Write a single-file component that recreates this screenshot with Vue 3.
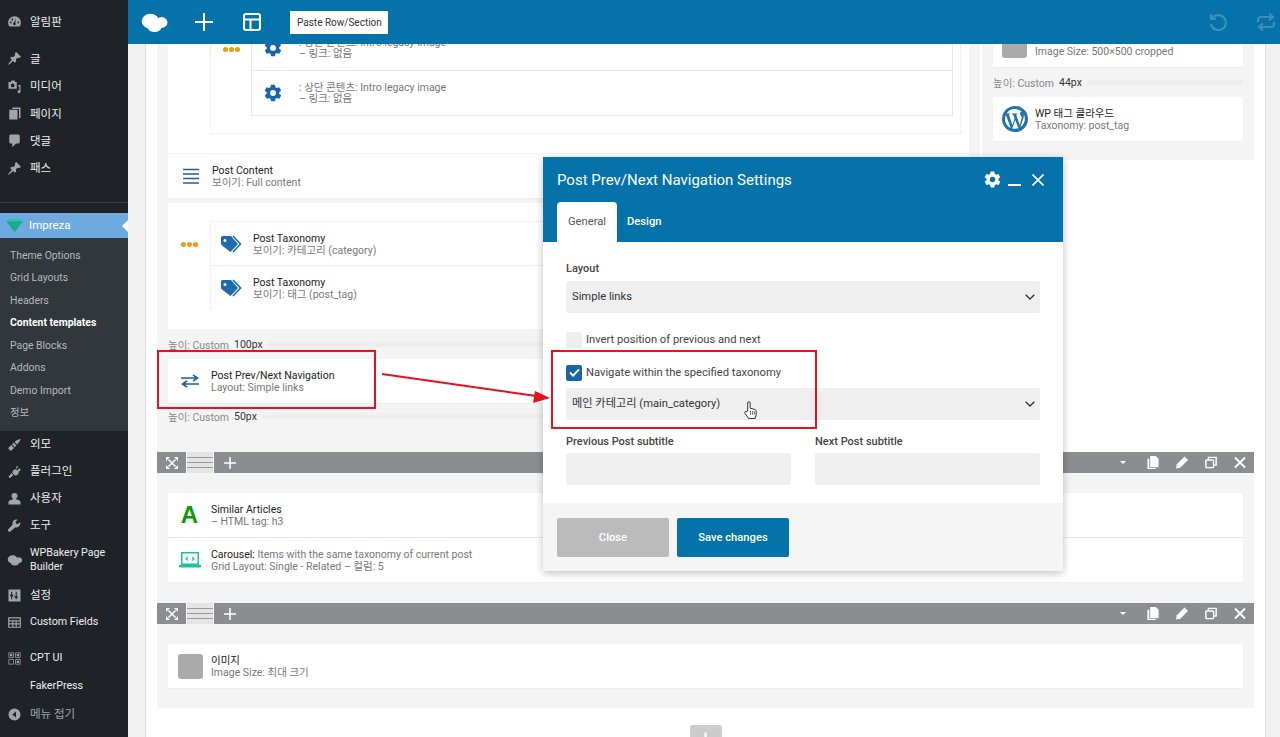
<script setup>
const pin = 'M10.44 3.02l1.82-1.82 6.36 6.35-1.83 1.82c-1.05-.68-2.48-.57-3.41.36l-.75.75c-.92.93-1.04 2.35-.35 3.41l-1.83 1.82-2.41-2.41-2.8 2.79c-.42.42-3.38 2.71-3.8 2.29s1.86-3.39 2.28-3.81l2.79-2.79L4.1 9.36l1.83-1.82c1.05.69 2.48.57 3.4-.36l.75-.75c.93-.92 1.05-2.35.36-3.41z';
const cloud = 'M1 8.500a6.500 5.500 0 1 0 13 0a6.500 5.500 0 1 0-13 0zM11.500 9.500a4.300 4 0 1 0 8.600 0a4.300 4 0 1 0-8.600 0zM5.500 13.500a5 3 0 1 0 10 0a5 3 0 1 0-10 0z';

const topMenu = [
  { label: '알림판', gap: 0, d: 'M10 3a8.500 8.500 0 0 0-8.500 8.500c0 2 .7 3.800 1.800 5.200h13.400a8.400 8.400 0 0 0 1.800-5.200A8.500 8.500 0 0 0 10 3zm-5 9.500a1.200 1.200 0 1 1 0-2.400 1.200 1.200 0 0 1 0 2.400zm2-4a1.200 1.200 0 1 1 0-2.400 1.200 1.200 0 0 1 0 2.400zM10 15a2 2 0 0 1-1-3.700L12 6l-1.100 5.400A2 2 0 0 1 10 15zm5-2.500a1.200 1.200 0 1 1 0-2.400 1.200 1.200 0 0 1 0 2.400z' },
  { label: '글', gap: 10, d: pin },
  { label: '미디어', gap: 0, d: 'M2 4h3l1-2h4l1 2h2v9H2V4zm5.500 2a2.500 2.500 0 1 0 0 5 2.500 2.500 0 0 0 0-5zM15 8h3v9a2 2 0 1 1-1.500-2V10H15V8z' },
  { label: '페이지', gap: 0, d: 'M7 2h11v14H16V4H7V2zM3 5h11v13H3V5z' },
  { label: '댓글', gap: 0, d: 'M5 2h10c1.100 0 2 .9 2 2v8c0 1.100-.9 2-2 2h-3l-5 5v-5H5c-1.100 0-2-.9-2-2V4c0-1.100.9-2 2-2z' },
  { label: '패스', gap: 0, d: pin },
];

const subMenu = ['Theme Options', 'Grid Layouts', 'Headers', 'Content templates', 'Page Blocks', 'Addons', 'Demo Import', '정보'];

const bottomMenu = [
  { label: '외모', h: 27, d: 'M18.500 2.500c-2 0-6 1.500-8.500 4l3.500 3.500c2.500-2.500 4-6 5-7.500zM9 7.500l-2.500 2 4 4 2-2.500-3.500-3.500zM5.500 10.500 1.500 15l3.500 3.500 4.500-4-4-4z' },
  { label: '플러그인', h: 27, d: 'M13 2l2 2-3 3 1.500 1.500 3-3 2 2-3 3c.5 2-1 4-3 4.500l-1.500.5-4-4 .5-1.500C8 8 10 6.500 12 7zM6 12l2.500 2.500L4 19l-2-2z' },
  { label: '사용자', h: 27, d: 'M10 2.500a4 4 0 0 1 4 4c0 1.500-.8 3-2 3.500v1c3 .5 6 1.800 6 3.500V18H2v-3.500c0-1.700 3-3 6-3.500v-1c-1.200-.5-2-2-2-3.500a4 4 0 0 1 4-4z' },
  { label: '도구', h: 27, d: 'M17.500 5.500 14.500 8l-2.500-.7L11.300 5l3-2.700c-2.200-.7-4.700 0-6 1.700-1 1.400-1.300 3-.7 4.500L2 14.500c-1 1-1 2.300-.1 3.200s2.200.9 3.200 0L11 12.300c1.500.5 3.200.2 4.500-.8 1.800-1.400 2.600-3.800 2-6z' },
  { label: 'WPBakery Page Builder', h: 43, d: cloud, rule: 'nonzero', latin: true },
  { label: '설정', h: 27, d: 'M2 2h16v16H2V2zm3.500 3v4H4v2h1.500v4h1.500v-4h1.500V9H7V5H5.500zm6 0v6H10v2h1.500v2H13v-2h1.500v-2H13V5h-1.500z' },
  { label: 'Custom Fields', h: 27, latin: true, d: 'M1.500 3h17v14h-17V3zm1.500 1.500V7h14V4.500H3zM3 8.500V11h4V8.500H3zm5.500 0V11h3V8.500h-3zm4.500 0V11h4V8.500h-4zM3 12.500V15.500h4V12.500H3zm5.500 0V15.500h3V12.500h-3zm4.500 0V15.500h4V12.500h-4z', gapAfter: 9 },
  { label: 'CPT UI', h: 27, latin: true, d: 'M2 2h7v7H2V2zm1 1v5h5V3H3zm1 1h3v3H4V4zm7-2h7v7h-7V2zm1 1v5h5V3h-5zm1 1h3v3h-3V4zM2 11h7v7H2v-7zm1 1v5h5v-5H3zm8-1h7v7h-7v-7zm1 1v5h5v-5h-5zm1 1h3v3h-3v-3z' },
  { label: 'FakerPress', h: 29, latin: true },
];

const gear = 'M19.400 13c.1-.3.100-.7.100-1s0-.7-.1-1l2.100-1.600c.2-.2.200-.4.100-.6l-2-3.500c-.1-.2-.4-.3-.6-.2l-2.500 1c-.5-.4-1.100-.7-1.700-1l-.4-2.600c0-.3-.2-.5-.5-.5h-4c-.3 0-.5.2-.5.400l-.4 2.700c-.6.200-1.200.6-1.700 1l-2.500-1c-.2-.1-.5 0-.6.2l-2 3.500c-.1.200-.1.500.1.600L4.500 11c0 .3-.1.700-.1 1s0 .7.100 1l-2.100 1.600c-.2.200-.2.400-.1.600l2 3.500c.1.200.4.300.6.200l2.500-1c.5.400 1.100.7 1.700 1l.4 2.600c0 .3.200.5.500.5h4c.3 0 .5-.2.500-.4l.4-2.700c.6-.2 1.200-.6 1.700-1l2.500 1c.2.100.5 0 .6-.2l2-3.500c.1-.2.100-.5-.1-.6L19.400 13zM12 15.500a3.500 3.500 0 1 1 0-7 3.500 3.500 0 0 1 0 7z';
const tag = 'M1 3.500A1.500 1.500 0 0 1 2.500 2H11l7 8-7.500 8L2 11.500A3 3 0 0 1 1 9.300V3.500zM5 5a1.500 1.500 0 1 0 0 3 1.500 1.500 0 0 0 0-3z';
</script>

<template>
  <div class="page">
    <aside class="side">
      <nav class="menu top-menu">
        <a v-for="m in topMenu" :key="m.label" class="item" :style="{ marginTop: m.gap + 'px' }">
          <svg class="micon" viewBox="0 0 20 20"><path :d="m.d" fill-rule="evenodd" /></svg>
          <span>{{ m.label }}</span>
        </a>
      </nav>
      <div class="sep"></div>
      <a class="current">
        <svg class="gem" viewBox="0 0 20 16"><path d="M0 3 4 0h12l4 3-10 13z" fill="#23c7a8" /><path d="M0 3h20L10 16z" fill="#1aa88e" /></svg>
        <span>Impreza</span>
      </a>
      <ul class="sub">
        <li v-for="s in subMenu" :key="s" :class="{ on: s === 'Content templates' }">{{ s }}</li>
      </ul>
      <nav class="menu">
        <a v-for="m in bottomMenu" :key="m.label" class="item" :class="{ two: m.h === 43, latin: m.latin }" :style="{ height: m.h + 'px', marginBottom: (m.gapAfter || 0) + 'px' }">
          <svg v-if="m.d" class="micon" viewBox="0 0 20 20"><path :d="m.d" :fill-rule="m.rule || 'evenodd'" /></svg>
          <i v-else class="micon"></i>
          <span>{{ m.label }}</span>
        </a>
        <a class="item collapse">
          <svg class="micon" viewBox="0 0 20 20"><path d="M10 2a8 8 0 1 1 0 16 8 8 0 0 1 0-16zm2 4-5 4 5 4V6z" fill-rule="evenodd" /></svg>
          <span>메뉴 접기</span>
        </a>
      </nav>
    </aside>

    <main class="main">
      <header class="topbar">
        <svg class="t-logo" viewBox="0 1 21 17"><path :d="cloud" fill="#fff" /></svg>
        <svg class="t-plus" viewBox="0 0 18 18"><path d="M9 0v18M0 9h18" stroke="#fff" stroke-width="2" /></svg>
        <svg class="t-layout" viewBox="0 0 18 18" fill="none" stroke="#fff" stroke-width="2"><rect x="1" y="1" width="16" height="16" rx="2" /><path d="M1 6.500h16M7.500 6.500V17" /></svg>
        <span class="paste">Paste Row/Section</span>
        <svg class="t-undo" viewBox="0 0 20 20" fill="none" stroke="#3d8fbb" stroke-width="2.200"><path d="M4.500 6A7.500 7.500 0 1 1 3 12" /><path d="M3 2v5h5" /></svg>
        <svg class="t-redo" viewBox="0 0 20 20" fill="none" stroke="#3d8fbb" stroke-width="2.200"><path d="M2 10V8a3 3 0 0 1 3-3h11M13 1.500 17 5l-4 3.500M18 10v2a3 3 0 0 1-3 3H4M7 11.500 3 15l4 3.500" /></svg>
      </header>

      <div class="canvas">
        <div class="columns">
          <section class="col-left">
            <div class="panel first">
              <div class="dotted">
                <span class="dots"><i></i><i></i><i></i></span>
                <div class="stack">
                  <div class="row clip">
                    <svg class="ic gear" viewBox="0 0 24 24"><path :d="gear" /></svg>
                    <div class="txt tight"><p class="sub-t">: 상단 콘텐츠: Intro legacy image</p><p class="sub-t">– 링크: 없음</p></div>
                  </div>
                  <div class="row">
                    <svg class="ic gear" viewBox="0 0 24 24"><path :d="gear" /></svg>
                    <div class="txt tight"><p class="sub-t">: 상단 콘텐츠: Intro legacy image</p><p class="sub-t">– 링크: 없음</p></div>
                  </div>
                </div>
              </div>
            </div>
            <div class="row card-row content-row">
              <svg class="ic lines" viewBox="0 0 16 16"><path d="M0 1.500h16M0 6h16M0 10.500h16M0 15h16" stroke="#1b5f9e" stroke-width="1.600" /></svg>
              <div class="txt"><p class="name">Post Content</p><p class="sub-t">보이기: Full content</p></div>
            </div>
            <div class="panel second">
              <div class="dotted tagbox">
                <span class="dots"><i></i><i></i><i></i></span>
                <div class="stack">
                  <div class="row">
                    <svg class="ic tag" viewBox="0 0 24 20"><path :d="tag" /><path d="M13 2l7.500 8-7.500 8" fill="none" stroke="#1e6bb0" stroke-width="1.600" /></svg>
                    <div class="txt"><p class="name">Post Taxonomy</p><p class="sub-t">보이기: 카테고리 (category)</p></div>
                  </div>
                  <div class="row">
                    <svg class="ic tag" viewBox="0 0 24 20"><path :d="tag" /><path d="M13 2l7.500 8-7.500 8" fill="none" stroke="#1e6bb0" stroke-width="1.600" /></svg>
                    <div class="txt"><p class="name">Post Taxonomy</p><p class="sub-t">보이기: 태그 (post_tag)</p></div>
                  </div>
                </div>
              </div>
            </div>
            <div class="height-tag h-100"><span>높이: Custom</span><b>100px</b><i class="bar"></i></div>
            <div class="row card-row nav-row">
              <svg class="ic arrows" viewBox="0 0 18 14" fill="none" stroke="#1b5f9e" stroke-width="1.600"><path d="M0 4h16M12 .8 16.500 4 12 7.200M18 10H2M6 6.800 1.500 10 6 13.200" /></svg>
              <div class="txt"><p class="name">Post Prev/Next Navigation</p><p class="sub-t">Layout: Simple links</p></div>
            </div>
            <div class="height-tag h-50"><span>높이: Custom</span><b>50px</b><i class="bar"></i></div>
          </section>

          <section class="col-right">
            <div class="row card-row image-row">
              <i class="thumb"></i>
              <div class="txt"><p class="name">이미지</p><p class="sub-t">Image Size: 500×500 cropped</p></div>
            </div>
            <div class="height-tag h-44"><span>높이: Custom</span><b>44px</b><i class="bar"></i></div>
            <div class="row card-row">
              <svg class="wp" viewBox="0 0 26 26"><circle cx="13" cy="13" r="13" fill="#2271b1" /><path d="M3 13c0 4 2.300 7.400 5.700 9L3.900 9c-.6 1.200-.9 2.600-.9 4zm16.800-.5c0-1.200-.5-2.100-.8-2.800-.5-.8-1-1.500-1-2.300 0-.9.700-1.700 1.600-1.700h.1A10 10 0 0 0 4.600 7.500h.6c1 0 2.700-.1 2.700-.1.500 0 .6.800 0 .8l-1.100.1 3.600 10.600 2.100-6.400-1.500-4.100-1-.1c-.6 0-.5-.9 0-.8 0 0 1.600.1 2.600.1s2.700-.1 2.700-.1c.5 0 .6.800 0 .8l-1.100.1 3.500 10.500 1-3.300c.4-1.300.7-2.200.7-3zM13.200 13.900l-2.900 8.500a10 10 0 0 0 6.100-.2l-.1-.1-3.100-8.200zM21.800 8.200l.1 1c0 1-.2 2.100-.7 3.500l-3 8.500A10 10 0 0 0 21.800 8.200z" fill="#fff" /></svg>
              <div class="txt"><p class="name">WP 태그 클라우드</p><p class="sub-t">Taxonomy: post_tag</p></div>
            </div>
          </section>
        </div>

        <div class="rowbar">
          <span class="bar-btn"><svg viewBox="0 0 12 12" fill="#fff"><path d="M0 0h4L0 4zM12 0v4L8 0zM0 12V8l4 4zM12 12H8l4-4zM3 2l7 7-1 1-7-7zM9 2l1 1-7 7-1-1z" /></svg></span>
          <span class="bar-grip"></span>
          <svg class="bar-plus" viewBox="0 0 12 12"><path d="M6 0v12M0 6h12" stroke="#fff" stroke-width="1.500" /></svg>
          <span class="bar-tools">
            <i class="caret"></i>
            <svg viewBox="0 0 12 14" fill="#fff"><path d="M3 0h6l3 3v9H3z" /><path d="M0 3h2v10h7v1H0z" /></svg>
            <svg viewBox="0 0 14 14" fill="#fff"><path d="M10 0l4 4-9 9-5 1 1-5z" /></svg>
            <svg viewBox="0 0 14 14" fill="none" stroke="#fff" stroke-width="1.700"><rect x="1" y="4" width="9" height="9" rx="1" /><path d="M4 4V1h9v9h-3" /></svg>
            <svg viewBox="0 0 12 12" stroke="#fff" stroke-width="1.800"><path d="M1 1l10 10M11 1 1 11" /></svg>
          </span>
        </div>
        <section class="band band-a">
          <div class="cards">
            <div class="row">
              <span class="big-a">A</span>
              <div class="txt"><p class="name">Similar Articles</p><p class="sub-t">– HTML tag: h3</p></div>
            </div>
            <div class="row">
              <svg class="ic laptop" viewBox="0 0 22 16"><path d="M2 0h18v13H2zM3.500 1.500v10h15v-10z" fill="#1fbf9f" fill-rule="evenodd" /><path d="M0 13h22v1.500a1 1 0 0 1-1 1H1a1 1 0 0 1-1-1z" fill="#1fbf9f" /><path d="M9 5 7 6.800 9 8.500M13 5l2 1.800-2 1.700" fill="none" stroke="#1fbf9f" stroke-width="1.200" /></svg>
              <div class="txt"><p class="sub-t"><span class="dark">Carousel:</span> Items with the same taxonomy of current post</p><p class="sub-t">Grid Layout: Single - Related – 컬럼: 5</p></div>
            </div>
          </div>
        </section>

        <div class="rowbar">
          <span class="bar-btn"><svg viewBox="0 0 12 12" fill="#fff"><path d="M0 0h4L0 4zM12 0v4L8 0zM0 12V8l4 4zM12 12H8l4-4zM3 2l7 7-1 1-7-7zM9 2l1 1-7 7-1-1z" /></svg></span>
          <span class="bar-grip"></span>
          <svg class="bar-plus" viewBox="0 0 12 12"><path d="M6 0v12M0 6h12" stroke="#fff" stroke-width="1.500" /></svg>
          <span class="bar-tools">
            <i class="caret"></i>
            <svg viewBox="0 0 12 14" fill="#fff"><path d="M3 0h6l3 3v9H3z" /><path d="M0 3h2v10h7v1H0z" /></svg>
            <svg viewBox="0 0 14 14" fill="#fff"><path d="M10 0l4 4-9 9-5 1 1-5z" /></svg>
            <svg viewBox="0 0 14 14" fill="none" stroke="#fff" stroke-width="1.700"><rect x="1" y="4" width="9" height="9" rx="1" /><path d="M4 4V1h9v9h-3" /></svg>
            <svg viewBox="0 0 12 12" stroke="#fff" stroke-width="1.800"><path d="M1 1l10 10M11 1 1 11" /></svg>
          </span>
        </div>
        <section class="band">
          <div class="cards">
            <div class="row">
              <i class="thumb low"></i>
              <div class="txt"><p class="name">이미지</p><p class="sub-t">Image Size: 최대 크기</p></div>
            </div>
          </div>
        </section>
        <div class="add-row"><span>+</span></div>
      </div>
    </main>

    <div class="modal">
      <div class="m-head">
        <div class="m-title">
          <span>Post Prev/Next Navigation Settings</span>
          <span class="m-icons">
            <svg viewBox="0 0 24 24" class="m-gear"><path :d="gear" fill="#fff" /></svg>
            <i class="m-min"></i>
            <svg viewBox="0 0 12 12" class="m-x" stroke="#fff" stroke-width="1.600"><path d="M.5.500l11 11M11.500.500l-11 11" /></svg>
          </span>
        </div>
        <div class="tabs"><span class="tab active">General</span><span class="tab">Design</span></div>
      </div>
      <div class="m-body">
        <label class="lbl">Layout</label>
        <div class="sel">Simple links<svg viewBox="0 0 10 6" fill="none" stroke="#333" stroke-width="1.300"><path d="M.7.700 5 5l4.300-4.300" /></svg></div>
        <div class="check c1"><i class="box"></i>Invert position of previous and next</div>
        <div class="check c2">
          <i class="box on"><svg viewBox="0 0 12 10" fill="none" stroke="#fff" stroke-width="2.200"><path d="M1 5l3.500 3.500L11 1.500" /></svg></i>
          Navigate within the specified taxonomy
        </div>
        <div class="sel s2">메인 카테고리 (main_category)<svg viewBox="0 0 10 6" fill="none" stroke="#333" stroke-width="1.300"><path d="M.7.700 5 5l4.300-4.300" /></svg></div>
        <div class="pair">
          <div><label class="lbl">Previous Post subtitle</label><div class="inp"></div></div>
          <div><label class="lbl">Next Post subtitle</label><div class="inp"></div></div>
        </div>
      </div>
      <div class="m-foot"><span class="btn grey">Close</span><span class="btn blue">Save changes</span></div>
    </div>

    <i class="mark m-a"></i>
    <i class="mark m-b"></i>
    <svg class="arrow" viewBox="0 0 1280 737"><path d="M382 374 536 396" stroke="#e8101f" stroke-width="2" /><path d="M550 398 535 391 533 403z" fill="#e8101f" /></svg>
    <svg class="hand" viewBox="0 0 16 20"><path d="M5 10V2.500a1.300 1.300 0 0 1 2.600 0V8l5 1.500c1 .4 1.400 1 1.400 2V15l-1 4H6l-4-5.500c-.8-1.500.8-2.500 2-1.500z" fill="#fff" stroke="#222" stroke-width="1" /><path d="M8 11v4M10 11v4M12 11v4" stroke="#222" stroke-width=".7" /></svg>
  </div>
</template>

<style scoped>
.page {
  position: relative;
  display: flex;
  width: 1280px;
  height: 737px;
  overflow: hidden;
  font-family: Roboto, "Noto Sans CJK KR", sans-serif;
  font-size: 10.500px;
  color: #777;
}
p { margin: 0; }
i { font-style: normal; }

.side {
  width: 128px;
  flex: none;
  background: #1f2327;
  color: #eee;
  font-size: 11.500px;
}
.top-menu { padding-top: 8px; }
.item {
  display: flex;
  align-items: center;
  height: 27.300px;
  padding-left: 7px;
  gap: 8px;
  line-height: 14px;
}
.latin { font-size: 10.700px; }
.micon { width: 15px; height: 15px; flex: none; fill: #a0a5aa; }
.two span { width: 92px; }
.collapse { color: #9ea3a8; }
.sep { height: 1px; background: #3b3f44; margin-top: 20px; }
.current {
  display: flex;
  align-items: center;
  gap: 6px;
  height: 25px;
  margin-top: 10px;
  padding-left: 6px;
  background: #6ea9e0;
  color: #fff;
  position: relative;
}
.current::after {
  content: '';
  position: absolute;
  right: 0;
  top: 7px;
  border: 6px solid transparent;
  border-right-color: #fff;
  border-left: 0;
}
.gem { width: 17px; height: 13px; }
.sub {
  list-style: none;
  margin: 0;
  padding: 7px 0 6px 10px;
  background: #32373c;
  color: #b4b9be;
  font-size: 10.400px;
}
.sub li { height: 22.500px; line-height: 22.500px; }
.sub .on { color: #fff; font-weight: 700; }

.main { flex: 1; min-width: 0; background: #f1f1f1; position: relative; }
.topbar {
  position: relative;
  z-index: 2;
  display: flex;
  align-items: center;
  height: 44px;
  background: #0572aa;
}
.t-logo { width: 29px; height: 23px; margin-left: 12px; }
.t-plus { width: 18px; height: 18px; margin-left: 26px; }
.t-layout { width: 18px; height: 18px; margin-left: 30px; }
.paste {
  margin-left: 29px;
  padding: 0 6px 0 7px;
  height: 23px;
  line-height: 23px;
  background: #fff;
  color: #333;
  font-size: 10px;
}
.t-undo { width: 20px; height: 20px; margin-left: auto; }
.t-redo { width: 20px; height: 20px; margin-left: 28px; margin-right: 4px; }

.canvas {
  margin-left: 17px;
  width: 1121px;
  height: 693px;
  padding: 0 11px;
  box-sizing: border-box;
  background: #fff;
  border-left: 1px solid #ddd;
  border-right: 1px solid #ddd;
  overflow: hidden;
}
.columns { display: flex; gap: 2px; height: 408px; }
.col-left { width: 823px; flex: none; background: #f4f4f4; padding: 0 11px; box-sizing: border-box; }
.col-right { width: 272px; height: 116px; background: #f4f4f4; padding: 0 11px; box-sizing: border-box; }

.panel { background: #fff; }
.first { height: 109px; }
.dotted { display: flex; align-items: flex-start; position: relative; margin-left: 42px; width: 751px; box-sizing: border-box; border: 1px dotted #e4e4e4; border-top: 0; }
.first .dotted { height: 90px; }
.stack { margin-left: 40px; margin-right: 7px; flex: 1; border: 1px solid #e8e8e8; border-top: 0; background: #fff; }
.dots { position: absolute; left: 12px; top: 3px; display: flex; gap: 1px; }
.dots i { width: 5px; height: 5px; border-radius: 50%; background: #f09a10; }
.row { display: flex; align-items: center; height: 44px; background: #fff; }
.row + .row { border-top: 1px solid #e8e8e8; }
.clip { height: 26px; overflow: hidden; align-items: flex-end; }
.clip .txt { padding-bottom: 11px; }
.clip .ic { margin-bottom: 12px; }
.ic { flex: none; }
.gear { width: 20px; height: 20px; fill: #1b66a6; margin: 0 16px 0 11px; }
.txt { line-height: 12px; padding-top: 2px; }
.txt.tight { line-height: 11px; padding-top: 0; }
.name { color: #222; }
.sub-t { color: #777; white-space: nowrap; }
.dark { color: #222; }

.card-row { box-shadow: 0 1px 0 #eee; }
.content-row { height: 44px; margin-top: 1px; }
.lines { width: 16px; height: 16px; margin: 0 13px 0 15px; }
.second { height: 126px; margin-top: 5px; padding-top: 18px; box-sizing: border-box; }
.tagbox { border-top: 1px dotted #e4e4e4; height: 89px; }
.tagbox .stack { border: 0; margin: 0; }
.tagbox .dots { left: -30px; top: 20px; }
.tag { width: 24px; height: 20px; margin: 0 9px; fill: #1e6bb0; }
.tagbox .row:first-child { height: 43px; }
.tagbox .row + .row { border-top: 1px solid #eee; }
.height-tag { display: flex; align-items: center; gap: 5px; height: 30px; color: #888; }
.height-tag b { font-weight: 400; color: #333; }
.height-tag .bar { flex: 1; height: 5px; background: #eee; }
.nav-row { height: 44px; }
.arrows { width: 18px; height: 14px; margin: 0 12px 0 13px; }
.h-50 { height: 26px; }
.col-right .image-row { margin-top: -21px; }
.thumb { width: 25px; height: 25px; border-radius: 3px; background: #aaa; margin: 0 8px 0 9px; flex: none; }
.thumb.low { margin-left: 10px; }
.wp { width: 26px; height: 26px; margin: 0 7px 0 9px; flex: none; }

.rowbar {
  display: flex;
  align-items: center;
  height: 21px;
  background: #8b8d90;
  color: #fff;
}
.bar-btn { width: 29px; height: 21px; display: flex; align-items: center; justify-content: center; border-right: 1px solid #fff; }
.bar-btn svg { width: 12px; height: 12px; }
.bar-grip { width: 26px; height: 21px; background: linear-gradient(#e4e4e4 5px, #999 5px 6px, #e4e4e4 6px 10px, #999 10px 11px, #e4e4e4 11px 15px, #999 15px 16px, #e4e4e4 16px); border-right: 1px solid #fff; }
.bar-plus { width: 12px; height: 12px; margin-left: 10px; }
.bar-tools { margin-left: auto; display: flex; align-items: center; gap: 17px; padding-right: 8px; }
.bar-tools svg { width: 12px; height: 13px; }
.caret { border: 3px solid transparent; border-top-color: #fff; border-bottom: 0; width: 0; margin-right: 4px; }
.band { background: #f4f4f4; padding: 20px 11px; }
.band-a { padding-bottom: 21px; }
.cards { background: #fff; box-shadow: 0 1px 0 #eee; }
.big-a { width: 43px; text-align: center; color: #0a9a0a; font-size: 24px; font-weight: 700; font-family: "Liberation Sans", sans-serif; line-height: 24px; }
.laptop { width: 22px; height: 16px; margin: 0 10px 0 11px; }
.add-row { display: flex; justify-content: center; padding-top: 17px; }
.add-row span { width: 32px; height: 24px; border-radius: 3px; background: #ccc; color: #fff; text-align: center; font-size: 22px; line-height: 28px; }

.modal {
  position: absolute;
  left: 543px;
  top: 157px;
  width: 520px;
  height: 414px;
  z-index: 3;
  background: #fff;
  box-shadow: 0 2px 8px rgba(0, 0, 0, .25);
  display: flex;
  flex-direction: column;
  color: #444;
  font-size: 11.200px;
}
.m-head { background: #0572aa; color: #fff; height: 85px; flex: none; padding: 0 14px; display: flex; flex-direction: column; justify-content: space-between; }
.m-title { display: flex; align-items: center; justify-content: space-between; height: 45px; font-size: 15px; line-height: 46px; }
.m-icons { display: flex; align-items: center; gap: 6px; margin-right: 5px; }
.m-gear { width: 19px; height: 19px; }
.m-min { width: 13px; height: 2px; background: #fff; margin-top: 10px; }
.m-x { width: 12px; height: 12px; margin-left: 5px; }
.tabs { display: flex; font-weight: 500; }
.tab { padding: 0 10px; height: 40px; line-height: 40px; }
.active { width: 60px; padding: 0; text-align: center; background: #fff; color: #555; font-weight: 400; border-radius: 4px 4px 0 0; }
.m-body { flex: 1; padding: 21px 23px 0; }
.lbl { display: block; color: #444; font-size: 11px; font-weight: 500; height: 12px; line-height: 12px; }
.sel { position: relative; height: 32px; line-height: 32px; background: #efefef; border-radius: 2px; padding: 0 6px; margin-top: 6px; color: #333; }
.sel svg { position: absolute; right: 5px; top: 13px; width: 10px; height: 6px; }
.check { display: flex; align-items: center; gap: 4px; height: 17px; }
.c1 { margin-top: 18px; }
.c2 { margin-top: 16px; }
.box { width: 16px; height: 16px; border-radius: 2px; background: #eee; display: flex; align-items: center; justify-content: center; }
.box.on { background: #1b66a6; }
.box svg { width: 11px; height: 9px; }
.s2 { margin-top: 7px; }
.pair { display: grid; grid-template-columns: 225px 225px; gap: 24px; margin-top: 16px; }
.inp { height: 32px; background: #efefef; border-radius: 2px; margin-top: 5px; }
.m-foot { height: 68px; flex: none; background: #f5f5f5; display: flex; align-items: center; gap: 8px; padding: 0 14px; }
.btn { width: 112px; height: 39px; line-height: 39px; text-align: center; color: #fff; border-radius: 2px; font-weight: 500; }
.grey { background: #bbb; }
.blue { background: #0572aa; }

.mark { position: absolute; z-index: 4; border: 2px solid #e8101f; box-sizing: border-box; }
.m-a { left: 157px; top: 350px; width: 219px; height: 59px; }
.m-b { left: 551px; top: 350px; width: 266px; height: 79px; }
.arrow { position: absolute; left: 0; top: 0; width: 1280px; height: 737px; z-index: 4; pointer-events: none; }
.hand { position: absolute; left: 743px; top: 400px; width: 15px; height: 20px; z-index: 5; }
</style>
